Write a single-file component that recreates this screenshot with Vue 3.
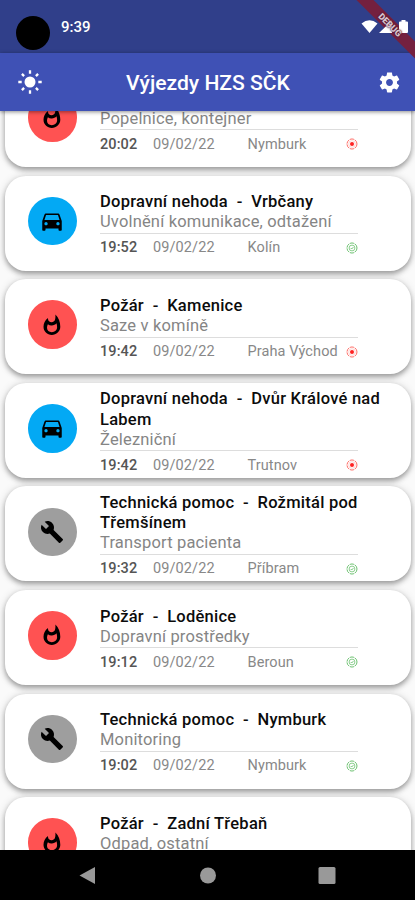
<script setup>
const icons = {
  car: 'M18.92 6.01C18.72 5.42 18.16 5 17.5 5h-11c-.66 0-1.21.42-1.42 1.01L3 12v8c0 .55.45 1 1 1h1c.55 0 1-.45 1-1v-1h12v1c0 .55.45 1 1 1h1c.55 0 1-.45 1-1v-8l-2.08-5.99zM6.5 16c-.83 0-1.5-.67-1.5-1.5S5.67 13 6.5 13s1.5.67 1.5 1.5S7.33 16 6.5 16zm11 0c-.83 0-1.5-.67-1.5-1.5s.67-1.5 1.5-1.5 1.5.67 1.5 1.5-.67 1.5-1.5 1.5zM5 11l1.5-4.5h11L19 11H5z',
  fire: 'M15.4 1.500c.1 2 .1 4-.5 5.500-.6 1.400-1.700 2.200-3.200 2.200-2.200 0-3.700-1.500-3.700-3.500V5C5 7 3.500 10.500 3.500 13.800c0 4.600 3.700 8.200 8.300 8.200s8.500-3.600 8.500-8.200c0-4.900-1.700-9.200-4.900-12.300zM11.800 19.200c-2.900 0-4.800-1.900-4.800-4.400 0-1.200.3-2.400.9-3.500 1.100.9 2.400 1.300 3.900 1.200 1.900-.1 3.600-.8 4.700-2.200.4 1.200.6 2.500.6 4 0 2.900-2.300 4.900-5.300 4.900z',
  tool: 'M22.7 19l-9.1-9.1c.9-2.3.4-5-1.5-6.9-2-2-5-2.4-7.4-1.3L9 6 6 9 1.6 4.700C.4 7.100.9 10.100 2.900 12.100c1.900 1.900 4.600 2.400 6.900 1.500l9.100 9.100c.4.4 1 .4 1.400 0l2.300-2.300c.5-.4.5-1.100.1-1.400z',
}
const items = [
  { kind: 'fire', title: ['Požár', 'Nymburk'], sub: 'Popelnice, kontejner', time: '20:02', place: 'Nymburk', live: true },
  { kind: 'car', title: ['Dopravní nehoda', 'Vrbčany'], sub: 'Uvolnění komunikace, odtažení', time: '19:52', place: 'Kolín', live: false },
  { kind: 'fire', title: ['Požár', 'Kamenice'], sub: 'Saze v komíně', time: '19:42', place: 'Praha Východ', live: true },
  { kind: 'car', title: ['Dopravní nehoda', 'Dvůr Králové nad Labem'], sub: 'Železniční', time: '19:42', place: 'Trutnov', live: true },
  { kind: 'tool', title: ['Technická pomoc', 'Rožmitál pod Třemšínem'], sub: 'Transport pacienta', time: '19:32', place: 'Příbram', live: false },
  { kind: 'fire', title: ['Požár', 'Loděnice'], sub: 'Dopravní prostředky', time: '19:12', place: 'Beroun', live: false },
  { kind: 'tool', title: ['Technická pomoc', 'Nymburk'], sub: 'Monitoring', time: '19:02', place: 'Nymburk', live: false },
  { kind: 'fire', title: ['Požár', 'Zadní Třebaň'], sub: 'Odpad, ostatní', time: '18:52', place: 'Beroun', live: false },
]
</script>

<template>
  <div class="screen">
    <header class="status">
      <span class="camera"></span>
      <span class="clock">9:39</span>
      <svg class="sysicons" width="50" height="20" viewBox="0 0 50 20" fill="#fff">
        <path d="M.5 4.600Q8.500-2 16.500 4.600L8.500 14z" />
        <path d="M31 1.500V14H18z" />
        <path d="M38 3.500q0-1 1-1h1.500V1h4v1.500H46q1 0 1 1V13q0 1-1 1h-7q-1 0-1-1z" />
      </svg>
    </header>
    <nav class="appbar">
      <svg class="sun" width="26" height="26" viewBox="0 0 26 26" fill="#fff">
        <circle cx="13" cy="13" r="5.500" />
        <g stroke="#fff" stroke-width="2.300">
          <path d="M13 1.300v3.400M13 21.300v3.400M1.300 13h3.400M21.300 13h3.400M4.900 4.900l2.200 2.200M18.900 18.900l2.200 2.200M4.900 21.100l2.200-2.200M18.900 7.100l2.200-2.200" />
        </g>
      </svg>
      <h1>Výjezdy HZS SČK</h1>
      <svg class="gear" width="25" height="25" viewBox="0 0 24 24" fill="#fff">
        <path d="M19.140 12.940c.04-.3.060-.61.060-.94 0-.32-.02-.64-.07-.94l2.030-1.580c.18-.14.230-.41.120-.61l-1.920-3.320c-.12-.22-.37-.29-.59-.22l-2.390.96c-.5-.38-1.030-.7-1.620-.94l-.36-2.540c-.04-.24-.24-.41-.48-.41h-3.840c-.24 0-.43.17-.47.410l-.36 2.540c-.59.24-1.130.57-1.620.94l-2.390-.96c-.22-.08-.47 0-.59.220L2.740 8.870c-.12.210-.08.470.120.610l2.030 1.580c-.05.3-.09.63-.09.940s.02.64.070.940l-2.030 1.580c-.18.14-.23.41-.12.610l1.920 3.320c.12.22.37.290.59.220l2.390-.96c.5.38 1.030.7 1.620.94l.36 2.540c.05.24.24.41.48.41h3.840c.24 0 .44-.17.47-.41l.36-2.540c.59-.24 1.130-.56 1.620-.94l2.390.96c.22.08.47 0 .59-.22l1.920-3.320c.12-.22.070-.47-.12-.61l-2.010-1.580zM12 15.300c-1.820 0-3.300-1.480-3.300-3.300s1.480-3.300 3.300-3.300 3.300 1.480 3.300 3.300-1.480 3.300-3.300 3.300z" />
      </svg>
    </nav>
    <div class="debug ribbon"><span></span></div>
    <div class="debug label"><span>DEBUG</span></div>
    <main class="viewport">
      <div class="list">
        <article v-for="(it, i) in items" :key="i" class="card">
          <div class="badge" :class="it.kind">
            <svg viewBox="0 0 24 24"><path :d="icons[it.kind]" /></svg>
          </div>
          <div class="body">
            <div class="title">{{ it.title[0] }}&nbsp; -&nbsp; {{ it.title[1] }}</div>
            <div class="sub">{{ it.sub }}</div>
            <div class="meta">
              <b>{{ it.time }}</b>
              <span class="date">09/02/22</span>
              <span class="place">{{ it.place }}</span>
              <svg v-if="it.live" class="state" viewBox="0 0 12 12" fill="none" stroke="#ff5c55">
                <circle cx="6" cy="6" r="5" stroke-width=".9" stroke-dasharray="4.500 .73" />
                <circle cx="6" cy="6" r="3.300" stroke-width=".5" stroke-opacity=".5" />
                <circle cx="6" cy="6" r="2" fill="#f22" stroke="none" />
              </svg>
              <svg v-else class="state" viewBox="0 0 12 12" fill="none" stroke="#5cba60" stroke-width=".9">
                <circle cx="6" cy="6" r="5" stroke-dasharray="4.500 .73" />
                <circle cx="6" cy="6" r="2.900" stroke-width=".7" />
                <path d="M4.700 6l1 1L7.400 5.100" stroke-width=".8" />
              </svg>
            </div>
          </div>
        </article>
      </div>
    </main>
    <footer class="navbar">
      <svg width="415" height="50" viewBox="0 0 415 50" fill="#999">
        <path d="M79.500 25.500L95 17v17z" />
        <circle cx="208" cy="25.500" r="8" />
        <rect x="318.500" y="17" width="17" height="17" rx="1.500" />
      </svg>
    </footer>
  </div>
</template>

<style>
body { margin: 0; overflow: hidden; }
</style>
<style scoped>
.screen { width: 415px; height: 900px; display: flex; flex-direction: column; overflow: hidden; background: #fafafa; font-family: Roboto, "Liberation Sans", sans-serif; position: relative; }
.status { height: 53px; flex: none; background: #303f8a; display: flex; box-sizing: border-box; padding: 16px 6px 0 16px; }
.camera { width: 34px; height: 34px; border-radius: 50%; background: #000; }
.clock { margin: 2px auto 0 11px; color: #fff; font-size: 15px; font-weight: 500; line-height: 19px; }
.sysicons { margin: 3px -2px 0 0; position: relative; z-index: 3; }
.debug { position: absolute; right: 0; top: 0; width: 62px; height: 62px; overflow: hidden; z-index: 2; }
.debug.label { z-index: 4; }
.debug span { position: absolute; left: -15px; top: 19px; width: 104px; height: 12px; transform: rotate(45deg); line-height: 12px; text-align: center; }
.ribbon span { background: #74203f; }
.label span { color: #d8c3cd; font-size: 9px; font-weight: 900; text-shadow: 0 0 2px #4a1530, 0 0 1px #4a1530; }
.appbar { height: 58px; flex: none; background: #3f51b5; display: flex; align-items: center; justify-content: space-between; padding: 0 13px 0 17px; box-shadow: 0 1px 4px rgba(0, 0, 0, .45); z-index: 1; }
h1 { margin: 2px 4px 0 0; color: #fff; font-size: 21.100px; font-weight: 500; line-height: 26px; white-space: nowrap; }
.viewport { flex: 1; min-height: 0; overflow: hidden; }
.list { margin-top: -39px; padding: 0 4px 0 5px; display: flex; flex-direction: column; gap: 8.600px; }
.card { height: 95px; flex: none; box-sizing: border-box; border-radius: 21px; background: #fff; box-shadow: 0 3px 5px rgba(0, 0, 0, .3), 0 1px 9px rgba(0, 0, 0, .17); display: flex; align-items: center; padding: 0 20px 0 23px; }
.badge { width: 48.500px; height: 48.500px; flex: none; border-radius: 50%; display: flex; align-items: center; justify-content: center; margin-top: -4px; }
.badge svg { width: 24px; height: 24px; }
.badge.car svg { width: 26px; height: 26px; }
.fire { background: #ff5252; }
.fire svg { margin-left: -1px; }
.car { background: #03a9f4; }
.tool { background: #9e9e9e; }
.body { margin: 2.500px 0 0 23.500px; flex: 1; }
.title { font-size: 16.500px; letter-spacing: .25px; font-weight: 500; line-height: 20.300px; color: #0c0c0c; }
.sub { font-size: 16.500px; letter-spacing: .17px; line-height: 20.500px; color: #858585; font-weight: 400; }
.meta { width: 258px; box-sizing: border-box; border-top: 1px solid #ddd; display: flex; align-items: center; font-size: 14.500px; letter-spacing: .1px; line-height: 17px; padding-top: 5.500px; color: #888; }
.meta b { width: 53px; font-weight: 500; color: #555; }
.date { width: 94.500px; }
.place { flex: 1; white-space: nowrap; }
.state { width: 12px; height: 12px; flex: none; }
.navbar { height: 50px; flex: none; background: #000; z-index: 1; }
.navbar svg { display: block; }
</style>
